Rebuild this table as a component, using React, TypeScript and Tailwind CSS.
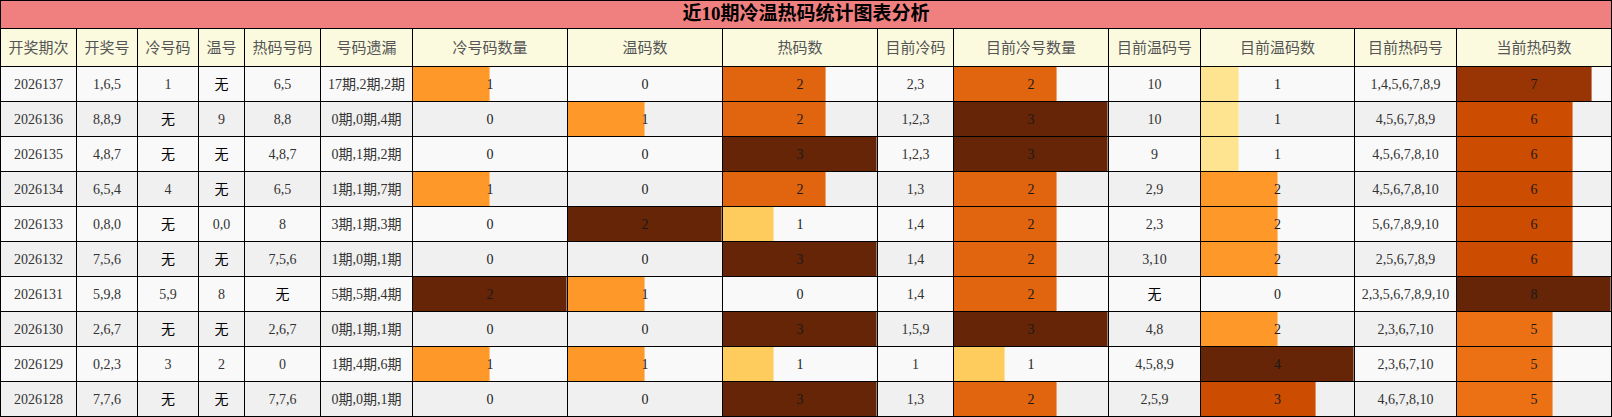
import React from "react";

// one row of the table: plain columns first, then the bar columns
interface Draw {
  issue: string;
  nums: string;
  cold: string;
  warm: string;
  hot: string;
  miss: string;
  coldCount: number;
  warmCount: number;
  hotCount: number;
  curCold: string;
  curColdCount: number;
  curWarm: string;
  curWarmCount: number;
  curHot: string;
  curHotCount: number;
}

const draws: Draw[] = [
  { issue: "2026137", nums: "1,6,5", cold: "1", warm: "无", hot: "6,5", miss: "17期,2期,2期", coldCount: 1, warmCount: 0, hotCount: 2, curCold: "2,3", curColdCount: 2, curWarm: "10", curWarmCount: 1, curHot: "1,4,5,6,7,8,9", curHotCount: 7 },
  { issue: "2026136", nums: "8,8,9", cold: "无", warm: "9", hot: "8,8", miss: "0期,0期,4期", coldCount: 0, warmCount: 1, hotCount: 2, curCold: "1,2,3", curColdCount: 3, curWarm: "10", curWarmCount: 1, curHot: "4,5,6,7,8,9", curHotCount: 6 },
  { issue: "2026135", nums: "4,8,7", cold: "无", warm: "无", hot: "4,8,7", miss: "0期,1期,2期", coldCount: 0, warmCount: 0, hotCount: 3, curCold: "1,2,3", curColdCount: 3, curWarm: "9", curWarmCount: 1, curHot: "4,5,6,7,8,10", curHotCount: 6 },
  { issue: "2026134", nums: "6,5,4", cold: "4", warm: "无", hot: "6,5", miss: "1期,1期,7期", coldCount: 1, warmCount: 0, hotCount: 2, curCold: "1,3", curColdCount: 2, curWarm: "2,9", curWarmCount: 2, curHot: "4,5,6,7,8,10", curHotCount: 6 },
  { issue: "2026133", nums: "0,8,0", cold: "无", warm: "0,0", hot: "8", miss: "3期,1期,3期", coldCount: 0, warmCount: 2, hotCount: 1, curCold: "1,4", curColdCount: 2, curWarm: "2,3", curWarmCount: 2, curHot: "5,6,7,8,9,10", curHotCount: 6 },
  { issue: "2026132", nums: "7,5,6", cold: "无", warm: "无", hot: "7,5,6", miss: "1期,0期,1期", coldCount: 0, warmCount: 0, hotCount: 3, curCold: "1,4", curColdCount: 2, curWarm: "3,10", curWarmCount: 2, curHot: "2,5,6,7,8,9", curHotCount: 6 },
  { issue: "2026131", nums: "5,9,8", cold: "5,9", warm: "8", hot: "无", miss: "5期,5期,4期", coldCount: 2, warmCount: 1, hotCount: 0, curCold: "1,4", curColdCount: 2, curWarm: "无", curWarmCount: 0, curHot: "2,3,5,6,7,8,9,10", curHotCount: 8 },
  { issue: "2026130", nums: "2,6,7", cold: "无", warm: "无", hot: "2,6,7", miss: "0期,1期,1期", coldCount: 0, warmCount: 0, hotCount: 3, curCold: "1,5,9", curColdCount: 3, curWarm: "4,8", curWarmCount: 2, curHot: "2,3,6,7,10", curHotCount: 5 },
  { issue: "2026129", nums: "0,2,3", cold: "3", warm: "2", hot: "0", miss: "1期,4期,6期", coldCount: 1, warmCount: 1, hotCount: 1, curCold: "1", curColdCount: 1, curWarm: "4,5,8,9", curWarmCount: 4, curHot: "2,3,6,7,10", curHotCount: 5 },
  { issue: "2026128", nums: "7,7,6", cold: "无", warm: "无", hot: "7,7,6", miss: "0期,0期,1期", coldCount: 0, warmCount: 0, hotCount: 3, curCold: "1,3", curColdCount: 2, curWarm: "2,5,9", curWarmCount: 3, curHot: "4,6,7,8,10", curHotCount: 5 },
];

const headers = [
  "开奖期次", "开奖号", "冷号码", "温号", "热码号码", "号码遗漏", "冷号码数量", "温码数",
  "热码数", "目前冷码", "目前冷号数量", "目前温码号", "目前温码数", "目前热码号", "当前热码数",
];

// YlOrBr-ish steps picked by how full the bar is
function barColor(ratio: number) {
  if (ratio >= 1) return "#662506";
  if (ratio >= 0.85) return "#993404";
  if (ratio >= 0.7) return "#CC4C02";
  if (ratio >= 0.65) return "#E1640F";
  if (ratio >= 0.6) return "#EC7014";
  if (ratio >= 0.45) return "#FE9929";
  if (ratio >= 0.3) return "#FECC5C";
  return "#FEE391";
}

const cell = "flex items-center justify-center border-r border-b border-black";

function TextCell({ value }: { value: string }) {
  return (
    <div className={`${cell} h-[35px]`}>
      {value === "无" ? (
        <span className="text-[14px] text-black">无</span>
      ) : (
        <span>{value}</span>
      )}
    </div>
  );
}

function BarCell({ value, max }: { value: number; max: number }) {
  const ratio = value / max;
  return (
    <div className={`${cell} relative h-[35px]`}>
      {value > 0 && (
        <div
          className="absolute inset-y-0 left-0 border-r border-white/40"
          style={{ width: `${ratio * 100}%`, backgroundColor: barColor(ratio) }}
        />
      )}
      <span className="relative text-[#1a1a1a]">{value}</span>
    </div>
  );
}

export default function App() {
  return (
    <div className="w-[1612px] h-[417px] bg-white font-['Liberation_Serif','Noto_Sans_CJK_SC',serif]">
      <div className="border-l border-t border-black">
        <div className="flex h-[28px] items-center justify-center border-r border-b border-black bg-[#F08080] text-[19px] font-bold text-black">
          近10期冷温热码统计图表分析
        </div>
        <div className="grid grid-cols-[76px_61px_61px_46px_76px_92px_155px_155px_155px_76px_155px_92px_154px_102px_155px] text-[14px] text-[#333]">
          {headers.map((h) => (
            <div
              key={h}
              className={`${cell} h-[38px] bg-[#FBFADF] text-[15px] text-[#555] font-['Noto_Sans_CJK_SC',sans-serif]`}
            >
              {h}
            </div>
          ))}
          {draws.map((d, i) => (
            <div key={d.issue} className={`contents ${i % 2 === 0 ? "[&>div]:bg-[#F9F9F9]" : "[&>div]:bg-[#F0F0F0]"}`}>
              <TextCell value={d.issue} />
              <TextCell value={d.nums} />
              <TextCell value={d.cold} />
              <TextCell value={d.warm} />
              <TextCell value={d.hot} />
              <TextCell value={d.miss} />
              <BarCell value={d.coldCount} max={2} />
              <BarCell value={d.warmCount} max={2} />
              <BarCell value={d.hotCount} max={3} />
              <TextCell value={d.curCold} />
              <BarCell value={d.curColdCount} max={3} />
              <TextCell value={d.curWarm} />
              <BarCell value={d.curWarmCount} max={4} />
              <TextCell value={d.curHot} />
              <BarCell value={d.curHotCount} max={8} />
            </div>
          ))}
        </div>
      </div>
    </div>
  );
}
